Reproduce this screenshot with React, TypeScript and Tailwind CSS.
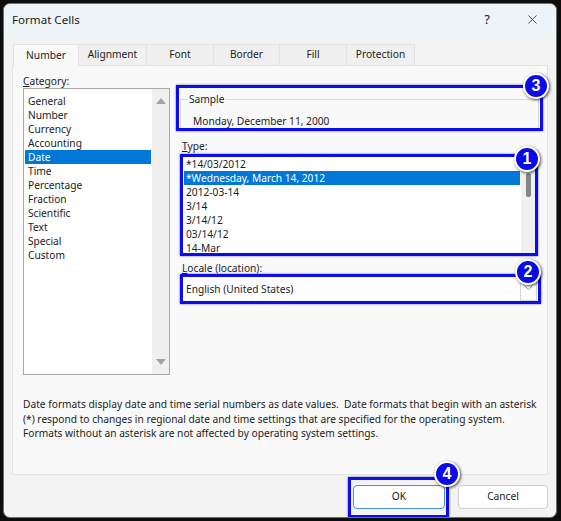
import { X } from 'lucide-react';

const CATEGORIES = [
  'General',
  'Number',
  'Currency',
  'Accounting',
  'Date',
  'Time',
  'Percentage',
  'Fraction',
  'Scientific',
  'Text',
  'Special',
  'Custom',
];

const TYPES = [
  '*14/03/2012',
  '*Wednesday, March 14, 2012',
  '2012-03-14',
  '3/14',
  '3/14/12',
  '03/14/12',
  '14-Mar',
];

const TABS = [
  { label: 'Number', w: 'w-[66px]' },
  { label: 'Alignment', w: 'w-[68px]' },
  { label: 'Font', w: 'w-[67px]' },
  { label: 'Border', w: 'w-[66px]' },
  { label: 'Fill', w: 'w-[67px]' },
  { label: 'Protection', w: 'w-[68px]' },
];

function Badge({ n, className }: { n: number; className: string }) {
  return (
    <div
      className={`absolute z-20 flex h-[26px] w-[26px] items-center justify-center rounded-full border-2 border-white bg-[#0b0be8] font-['Liberation_Sans',sans-serif] text-[16px] font-bold leading-none text-white shadow-[1px_1px_3px_rgba(0,0,0,0.7)] ${className}`}
    >
      {n}
    </div>
  );
}

export default function App() {
  return (
    <div className="h-[521px] w-[561px] bg-[#0d0d0d] pb-[3px] pl-[3px] pr-[4px] pt-[3px] font-['Noto_Sans',sans-serif] text-[#1b1b1b]">
      <div className="flex h-full flex-col overflow-hidden rounded-[7px] border border-[#6f6f6f] bg-[#f3f3f3]">
        {/* title bar */}
        <div className="flex h-[31px] shrink-0 items-center bg-[#ecf4f7] pl-[8px]">
          <span className="text-[11.6px]">Format Cells</span>
          <span className="ml-auto w-[20px] text-center text-[13px]">?</span>
          <span className="ml-[27px] mr-[16px] flex w-[16px] justify-center">
            <X size={15} strokeWidth={1.2} />
          </span>
        </div>

        <div className="flex flex-1 flex-col px-[8px] pt-[9px]">
          {/* tabs */}
          <div className="ml-[1px] flex h-[21px] text-[10.2px]">
            {TABS.map((t, i) => (
              <div
                key={t.label}
                className={`${t.w} flex items-center justify-center border-r border-t border-[#e3e3e3] ${
                  i === 0 ? 'relative z-10 mb-[-1px] h-[22px] border-l bg-[#f9f9f9]' : 'bg-[#f0f0f0]'
                }`}
              >
                {t.label}
              </div>
            ))}
          </div>

          {/* panel */}
          <div className="flex h-[410px] flex-col border border-[#e3e3e3] bg-[#f9f9f9] text-[10.2px]">
            <div className="flex">
              {/* category column */}
              <div className="ml-[10px] w-[147px] pt-[9px]">
                <div className="h-[13px] leading-[13px]">
                  <span className="underline">C</span>ategory:
                </div>
                <div className="flex h-[287px] border border-[#a8a8a8] bg-white">
                  <div className="flex-1 px-[1px] pt-[5px]">
                    {CATEGORIES.map((c) => (
                      <div
                        key={c}
                        className={`h-[14px] pl-[3px] leading-[14px] ${
                          c === 'Date' ? 'bg-[#0078d7] text-white' : ''
                        }`}
                      >
                        {c}
                      </div>
                    ))}
                  </div>
                  <div className="flex w-[17px] flex-col items-center justify-between bg-[#f0f0f0] py-[9px]">
                    <div className="h-0 w-0 border-x-[5px] border-b-[6px] border-x-transparent border-b-[#a3a3a3]" />
                    <div className="h-0 w-0 border-x-[5px] border-t-[6px] border-x-transparent border-t-[#a3a3a3]" />
                  </div>
                </div>
              </div>

              {/* right column */}
              <div className="ml-[6px] w-[367px] pt-[19px]">
                {/* sample */}
                <div className="relative h-[46px] border-[3px] border-[#0c0cee] px-[1px] pt-[4px] shadow-[0_0_2px_rgba(0,0,60,0.6)]">
                  <fieldset className="border-x border-t border-[#dcdcdc] px-[6px]">
                    <legend className="px-[2px] leading-[14px]">Sample</legend>
                    <div className="ml-[6px] mt-[8px] h-[14px] leading-[14px]">Monday, December 11, 2000</div>
                  </fieldset>
                  <Badge n={3} className="left-[344px] top-[-15px]" />
                </div>

                {/* type */}
                <div className="ml-[6px] mt-[8px] h-[14px] leading-[14px]">
                  <span className="underline">T</span>ype:
                </div>
                <div className="relative ml-[4px] mt-[1px] flex h-[102px] w-[358px] border-[3px] border-[#0c0cee] bg-white shadow-[0_0_2px_rgba(0,0,60,0.6)]">
                  <div className="flex-1 pl-[1px] pr-[1px]">
                    {TYPES.map((t, i) => (
                      <div
                        key={t}
                        className={`h-[14px] pl-[2px] leading-[14px] ${i === 1 ? 'bg-[#0078d7] text-white' : ''}`}
                      >
                        {t}
                      </div>
                    ))}
                  </div>
                  <div className="flex w-[14px] justify-center bg-[#f0f0f0] pt-[16px]">
                    <div className="h-[24px] w-[5px] rounded-[2px] bg-[#858585]" />
                  </div>
                  <Badge n={1} className="left-[331px] top-[-11px]" />
                </div>

                {/* locale */}
                <div className="ml-[6px] mt-[6px] h-[12px] leading-[12px]">
                  <span className="underline">L</span>ocale (location):
                </div>
                <div className="relative ml-[4px] flex h-[30px] w-[361px] items-center border-[3px] border-[#0c0cee] bg-white shadow-[0_0_2px_rgba(0,0,60,0.6)]">
                  <span className="ml-[3px] flex-1 leading-[14px]">English (United States)</span>
                  <div className="mr-[1px] flex h-[23px] w-[17px] justify-center border border-[#d4d4d4] bg-white pt-[6px]">
                    <svg width="9" height="6" viewBox="0 0 9 6">
                      <path d="M0.5 0.5 L4.5 4.5 L8.5 0.5" fill="none" stroke="#9a9a9a" strokeWidth="1" />
                    </svg>
                  </div>
                  <Badge n={2} className="left-[332px] top-[-18px]" />
                </div>
              </div>
            </div>

            <p className="ml-[10px] mt-[22px] whitespace-pre leading-[14.5px]">
              {'Date formats display date and time serial numbers as date values.  Date formats that begin with an asterisk\n(*) respond to changes in regional date and time settings that are specified for the operating system.\nFormats without an asterisk are not affected by operating system settings.'}
            </p>
          </div>

          {/* buttons */}
          <div className="mt-[10px] flex justify-end gap-[13px] text-[10.2px]">
            <div className="relative">
              <div className="absolute bottom-[-9px] left-[-5px] right-[-4px] top-[-8px] border-[3px] border-[#0c0cee] shadow-[0_0_2px_rgba(0,0,60,0.6)]" />
              <button className="relative flex h-[24px] w-[92px] items-center justify-center rounded-[4px] border border-[#4a90d9] bg-white">
                OK
              </button>
              <Badge n={4} className="left-[81px] top-[-24px]" />
            </div>
            <button className="flex h-[24px] w-[90px] items-center justify-center rounded-[4px] border border-[#d0d0d0] bg-white">
              Cancel
            </button>
          </div>
        </div>
      </div>
    </div>
  );
}
